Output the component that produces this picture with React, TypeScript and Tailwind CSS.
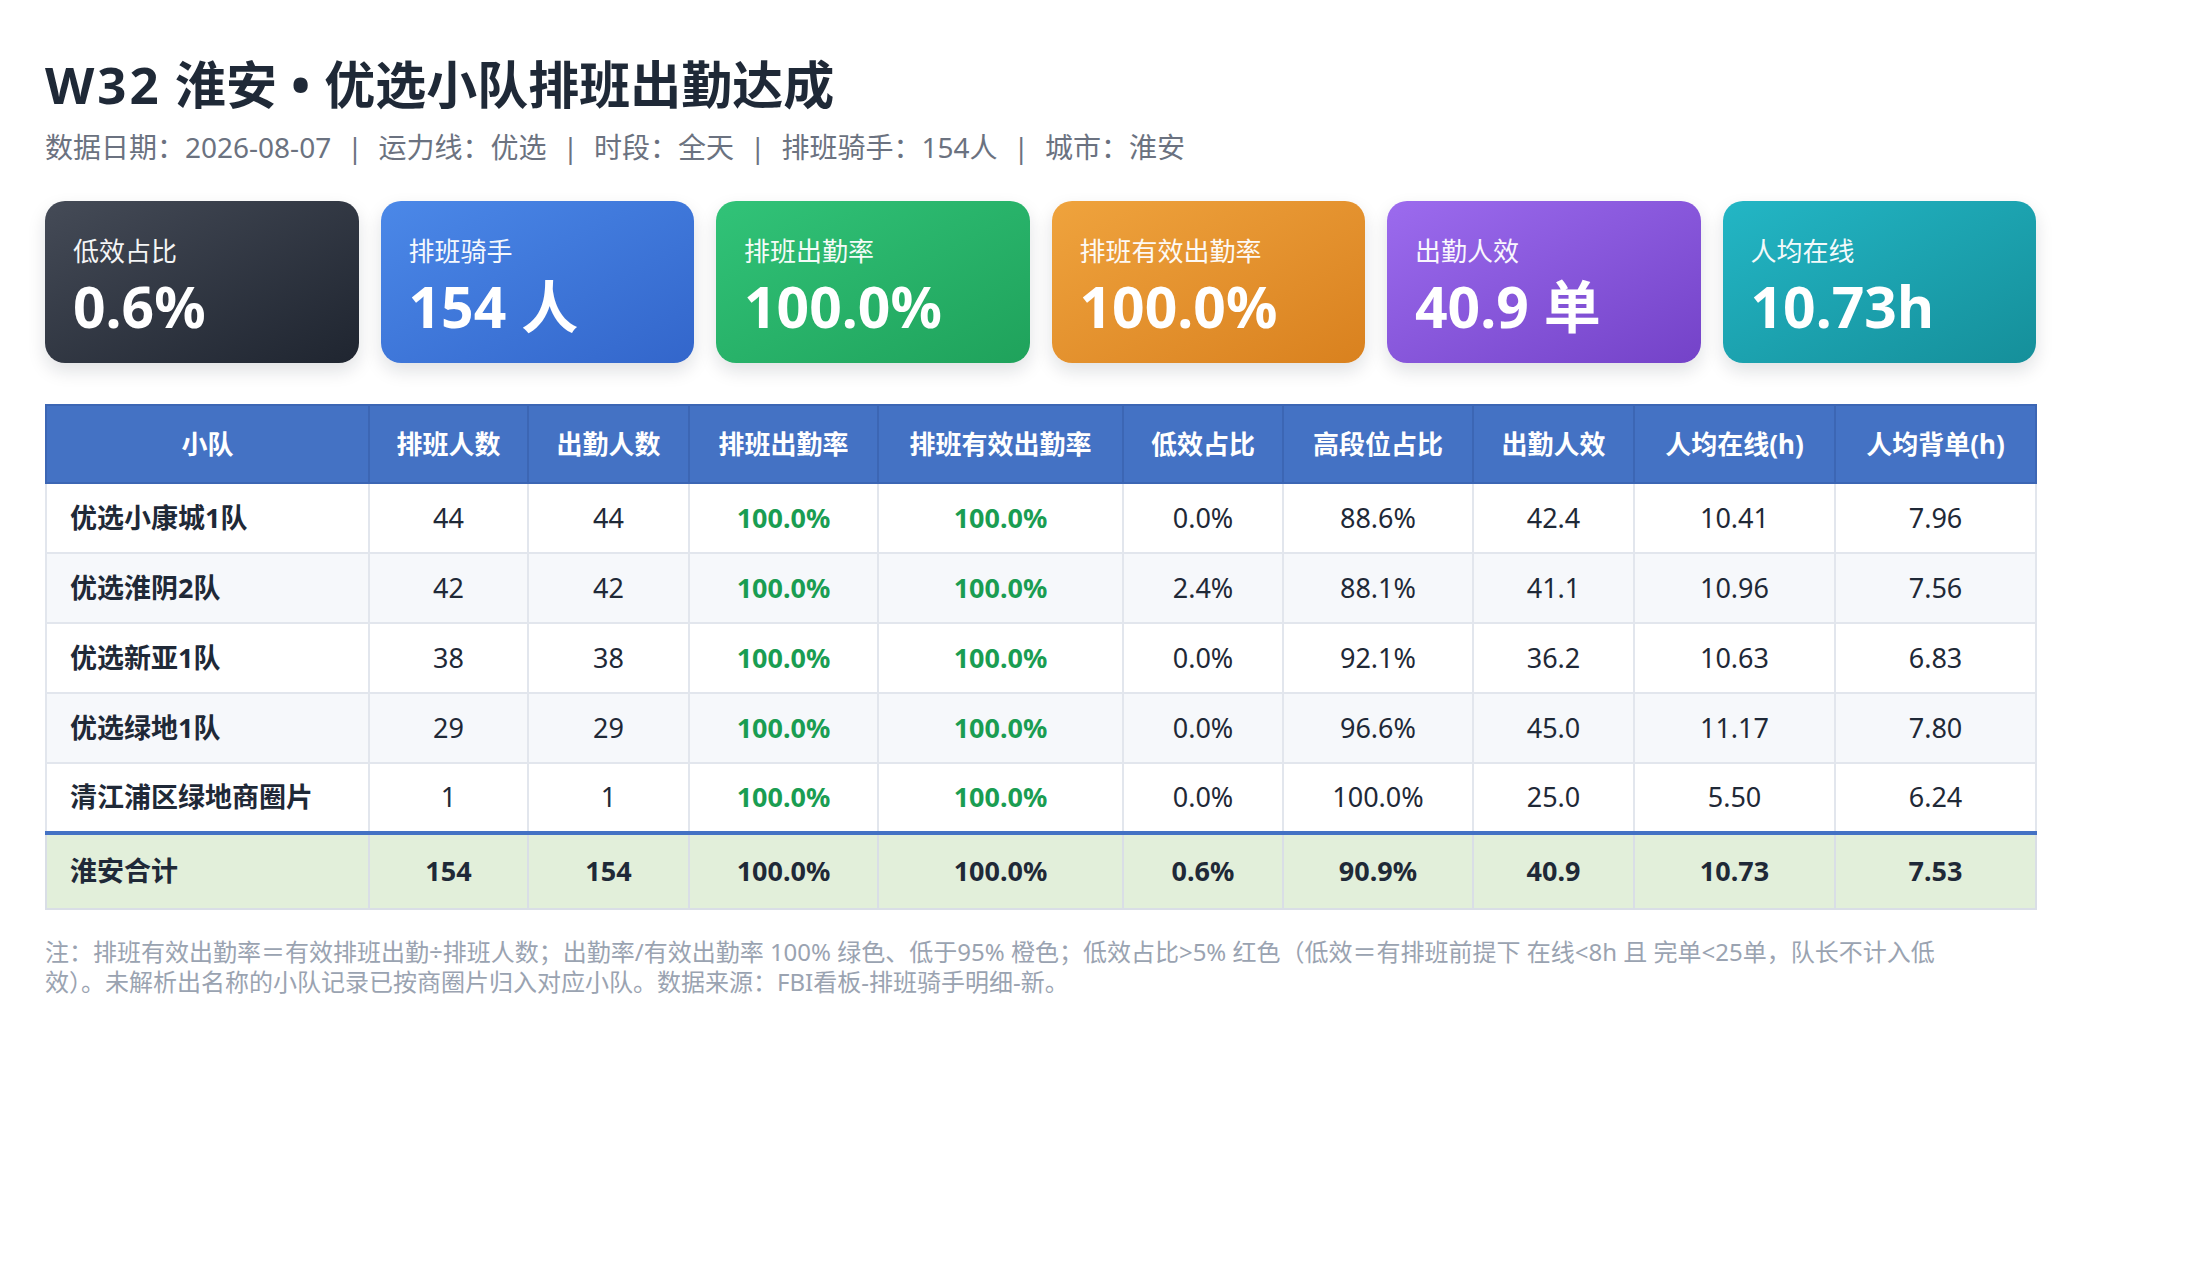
const cards = [
  { label: '低效占比', value: '0.6%', bg: 'bg-gradient-to-br from-[#454b57] to-[#1f2530]' },
  { label: '排班骑手', value: '154 人', bg: 'bg-gradient-to-br from-[#4b88e8] to-[#3366cb]' },
  { label: '排班出勤率', value: '100.0%', bg: 'bg-gradient-to-br from-[#31c378] to-[#1fa25b]' },
  { label: '排班有效出勤率', value: '100.0%', bg: 'bg-gradient-to-br from-[#efa33d] to-[#d9811e]' },
  { label: '出勤人效', value: '40.9 单', bg: 'bg-gradient-to-br from-[#9c6bee] to-[#7442c8]' },
  { label: '人均在线', value: '10.73h', bg: 'bg-gradient-to-br from-[#23b6c5] to-[#158f9a]' },
]

const columns = [
  { title: '小队', w: 'w-[323px]' },
  { title: '排班人数', w: 'w-[159px]' },
  { title: '出勤人数', w: 'w-[161px]' },
  { title: '排班出勤率', w: 'w-[189px]' },
  { title: '排班有效出勤率', w: 'w-[245px]' },
  { title: '低效占比', w: 'w-[160px]' },
  { title: '高段位占比', w: 'w-[190px]' },
  { title: '出勤人效', w: 'w-[161px]' },
  { title: '人均在线(h)', w: 'w-[201px]' },
  { title: '人均背单(h)', w: 'w-[201px]' },
]

type Row = [string, number, number, string, string, string, string, string, string, string]

const rows: Row[] = [
  ['优选小康城1队', 44, 44, '100.0%', '100.0%', '0.0%', '88.6%', '42.4', '10.41', '7.96'],
  ['优选淮阴2队', 42, 42, '100.0%', '100.0%', '2.4%', '88.1%', '41.1', '10.96', '7.56'],
  ['优选新亚1队', 38, 38, '100.0%', '100.0%', '0.0%', '92.1%', '36.2', '10.63', '6.83'],
  ['优选绿地1队', 29, 29, '100.0%', '100.0%', '0.0%', '96.6%', '45.0', '11.17', '7.80'],
  ['清江浦区绿地商圈片', 1, 1, '100.0%', '100.0%', '0.0%', '100.0%', '25.0', '5.50', '6.24'],
]

const total: Row = ['淮安合计', 154, 154, '100.0%', '100.0%', '0.6%', '90.9%', '40.9', '10.73', '7.53']

const meta = ['数据日期：2026-08-07', '运力线：优选', '时段：全天', '排班骑手：154人', '城市：淮安']

export default function App() {
  return (
    <div className="min-h-screen bg-white font-['Noto_Sans','Noto_Sans_CJK_SC',sans-serif] text-[#1f2937]">
      <div className="w-[1991px] pl-[45px] pt-[54px] box-content">
        <h1 className="text-[51px] leading-[60px] font-bold text-[#1f2937]">
          <span className="tracking-[3px]">W32</span> 淮安<span className="px-[14px]">•</span>优选小队排班出勤达成
        </h1>
        <div className="mt-[14px] flex items-center text-[28px] leading-[38px] text-[#6b7280]">
          {meta.map((m, i) => (
            <span key={m} className="flex items-center">
              {i > 0 && <span className="px-[16px] text-[#6b7280]">|</span>}
              {m}
            </span>
          ))}
        </div>

        {/* 指标卡片 */}
        <div className="mt-[35px] flex gap-[22px]">
          {cards.map(c => (
            <div
              key={c.label}
              className={`${c.bg} w-[314px] h-[162px] rounded-[20px] pl-[28px] pt-[32px] text-white shadow-[0_8px_18px_rgba(17,24,39,0.13)]`}
            >
              <div className="text-[26px] leading-[36px] opacity-95">{c.label}</div>
              <div className="mt-[5px] text-[57px] leading-[64px] font-bold">{c.value}</div>
            </div>
          ))}
        </div>

        {/* 明细表 */}
        <table className="mt-[41px] table-fixed border-collapse w-[1991px] text-[27px]">
          <colgroup>
            {columns.map(c => (
              <col key={c.title} className={c.w} />
            ))}
          </colgroup>
          <thead>
            <tr className="h-[78px] bg-[#4472c4] text-white text-[26px]">
              {columns.map(c => (
                <th key={c.title} className="border-2 border-[#3c66b4] font-bold text-center">
                  {c.title}
                </th>
              ))}
            </tr>
          </thead>
          <tbody>
            {rows.map((r, i) => (
              <tr key={r[0]} className={`h-[70px] ${i % 2 === 1 ? 'bg-[#f6f8fb]' : 'bg-white'}`}>
                {r.map((v, j) => (
                  <td
                    key={j}
                    className={`border-2 border-[#e2e6ed] ${
                      j === 0
                        ? 'text-left pl-[23px] font-bold'
                        : j === 3 || j === 4
                          ? 'text-center font-bold text-[#1a9d52]'
                          : 'text-center'
                    }`}
                  >
                    {v}
                  </td>
                ))}
              </tr>
            ))}
            <tr className="h-[76px] bg-[#e2efda] font-bold">
              {total.map((v, j) => (
                <td
                  key={j}
                  className={`border-2 border-[#d9dee6] border-t-4 border-t-[#4472c4] ${
                    j === 0 ? 'text-left pl-[23px]' : 'text-center'
                  }`}
                >
                  {v}
                </td>
              ))}
            </tr>
          </tbody>
        </table>

        <p className="mt-[27px] text-[24px] leading-[30px] text-[#9aa3b1]">
          注：排班有效出勤率＝有效排班出勤÷排班人数；出勤率/有效出勤率 100% 绿色、低于95% 橙色；低效占比&gt;5% 红色（低效＝有排班前提下 在线&lt;8h 且 完单&lt;25单，队长不计入低
          <br />
          效）。未解析出名称的小队记录已按商圈片归入对应小队。数据来源：FBI看板-排班骑手明细-新。
        </p>
      </div>
    </div>
  )
}
